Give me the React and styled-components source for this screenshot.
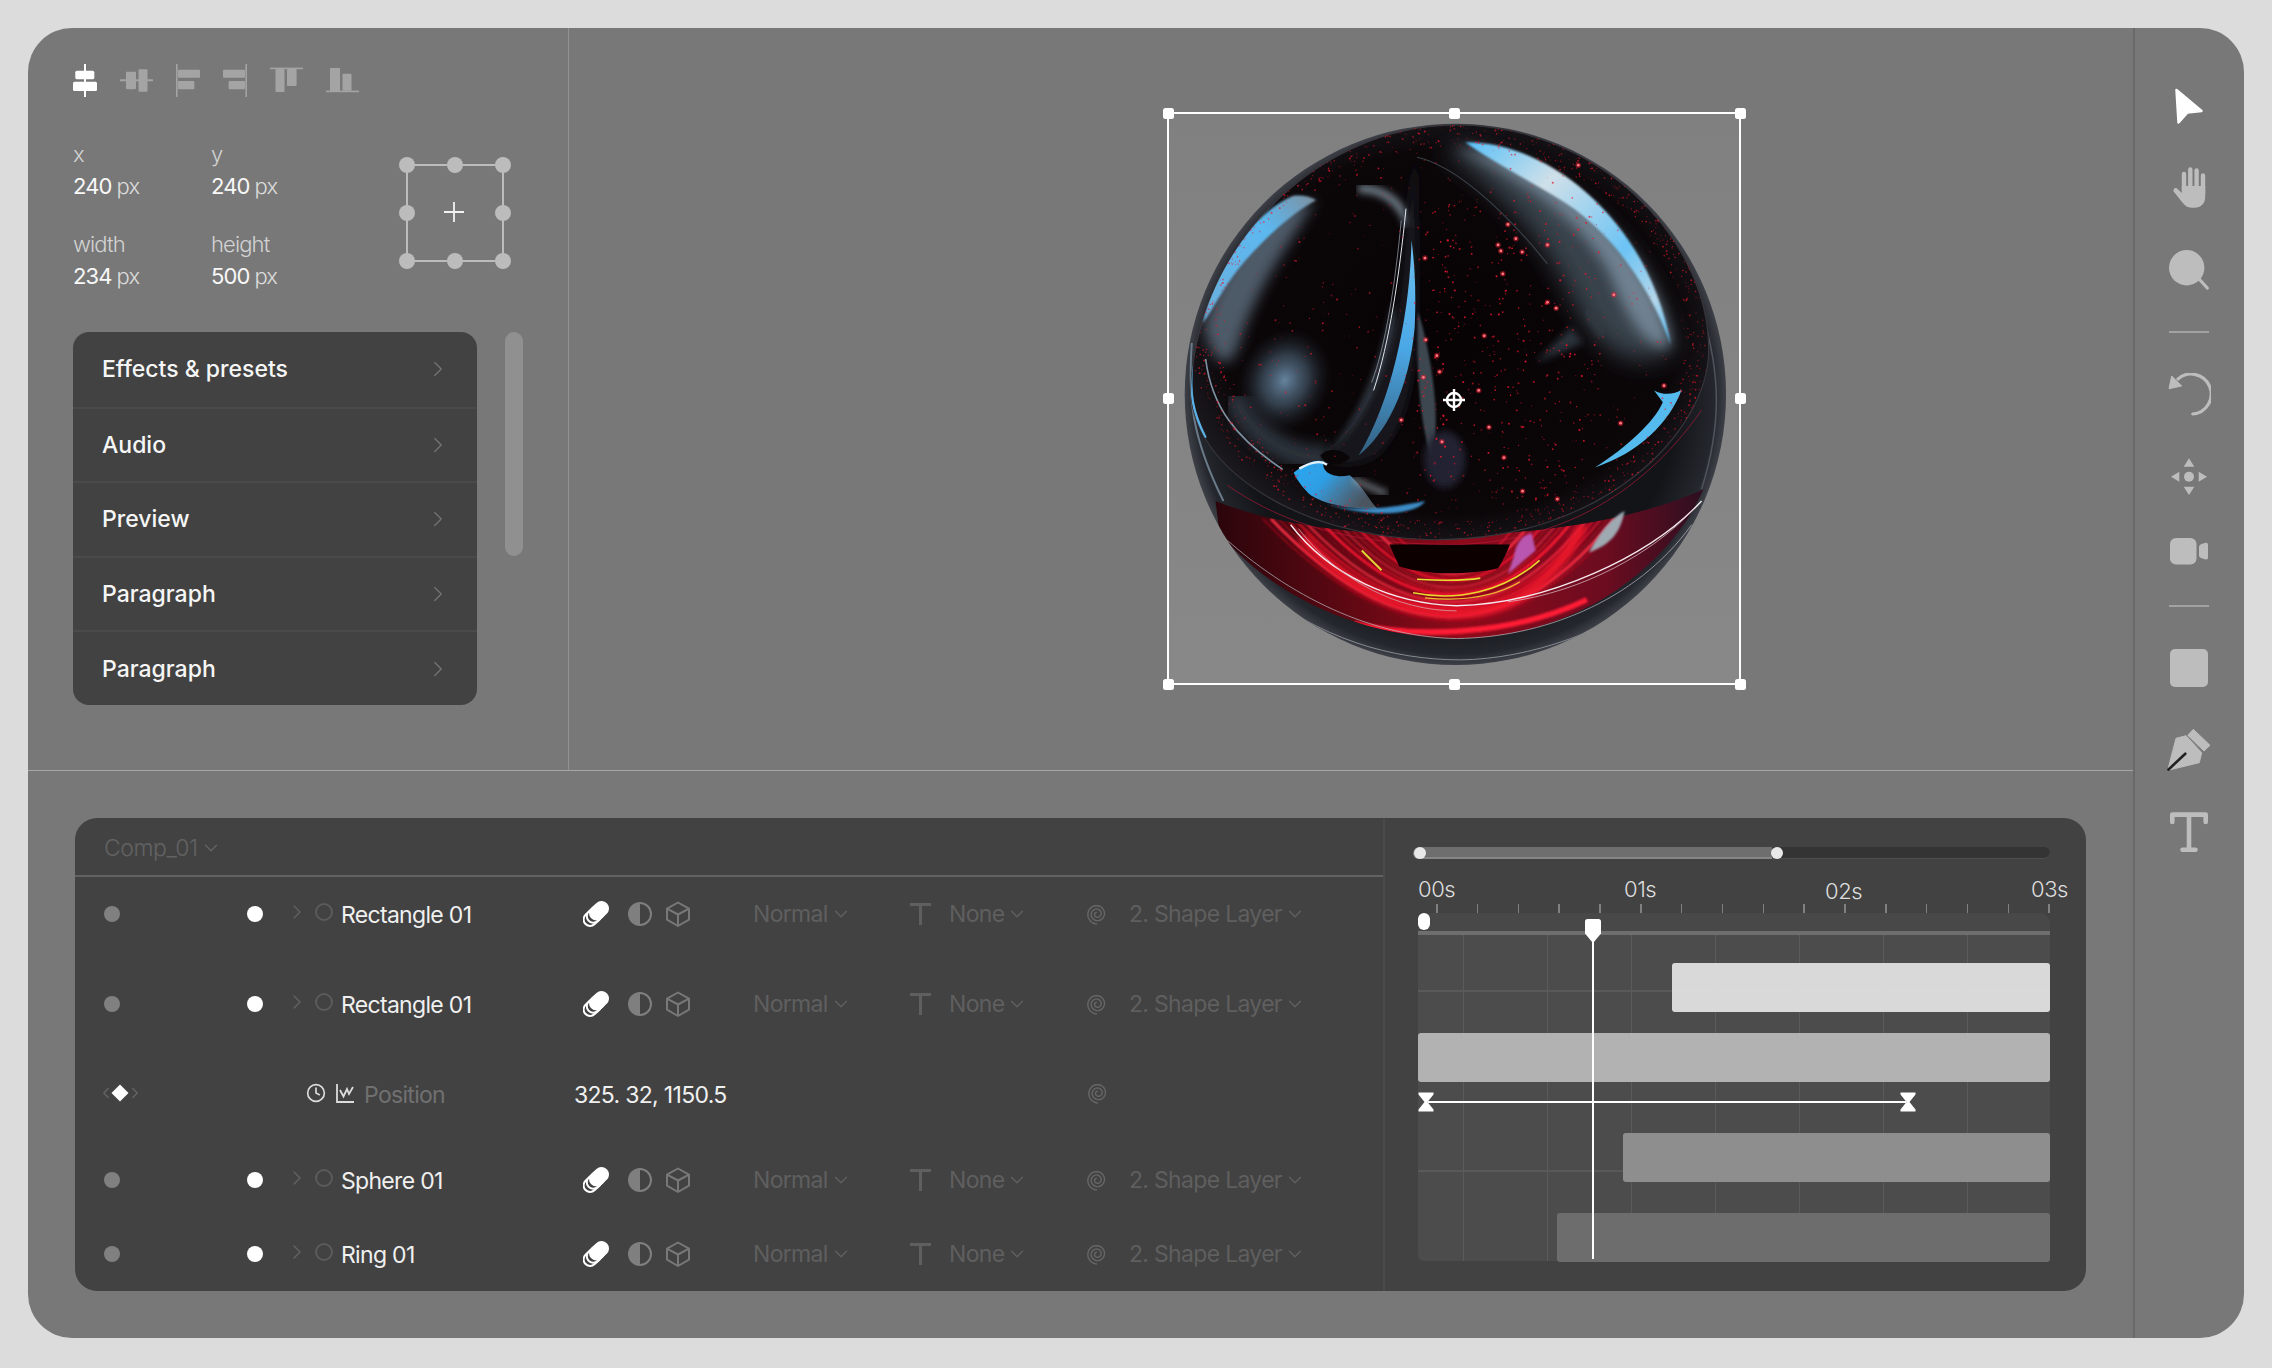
import React from 'react'
import styled, { createGlobalStyle } from 'styled-components'
import { ChevronRight, ChevronDown, ChevronLeft, Clock } from 'lucide-react'

const GlobalStyle = createGlobalStyle`
  html, body { margin: 0; padding: 0; background: #dcdcdc; }
  body { font-family: Inter, "Liberation Sans", sans-serif; }
`

const Page = styled.div`
  width: 2272px;
  height: 1368px;
  padding: 28px 28px 30px;
  box-sizing: border-box;
  overflow: hidden;
`

const Card = styled.div`
  display: flex;
  height: 100%;
  background: #787878;
  border-radius: 44px;
  overflow: hidden;
`

const Main = styled.div`
  display: flex;
  flex-direction: column;
  width: 2105px;
`

const Top = styled.div`
  display: flex;
  height: 743px;
  border-bottom: 1px solid #a6a6a6;
  box-sizing: border-box;
`

const Side = styled.aside`
  width: 541px;
  box-sizing: border-box;
  padding: 36px 0 0 45px;
  border-right: 1px solid #929292;
`

const AlignRow = styled.div`
  display: flex;
  gap: 23px;
  height: 33px;
`

const Metrics = styled.div`
  display: flex;
  margin-top: 41px;
`

const MetricGrid = styled.div`
  display: grid;
  grid-template-columns: 138px 138px;
  grid-template-rows: 32px 32px 58px 32px;
  width: 333px;
  font-size: 22px;
  line-height: 32px;
  letter-spacing: -0.04em;
`

const MetricLabel = styled.div`
  color: #d2d2d2;
  font-weight: 300;
  align-self: end;
`

const MetricValue = styled.div`
  color: #f8f8f8;
  font-weight: 400;
  span { color: #dcdcdc; font-weight: 300; margin-left: 5px; }
`

const AnchorBox = styled.div`
  position: relative;
  width: 98px;
  height: 98px;
  margin-top: 26px;
  border: 2px solid #bcbcbc;
  box-sizing: border-box;
`

const AnchorDot = styled.i`
  position: absolute;
  left: ${p => p.$x}px;
  top: ${p => p.$y}px;
  width: 16px;
  height: 16px;
  margin: -9px 0 0 -9px;
  border-radius: 50%;
  background: #bcbcbc;
`

const PlusMark = styled.svg`
  position: absolute;
  left: 36px;
  top: 36px;
`

const MenuWrap = styled.div`
  display: flex;
  gap: 28px;
  margin-top: 40px;
`

const Menu = styled.div`
  width: 404px;
  height: 373px;
  background: #424242;
  border-radius: 16px;
  overflow: hidden;
`

const MenuRow = styled.div`
  display: flex;
  align-items: center;
  justify-content: space-between;
  height: 74.6px;
  box-sizing: border-box;
  padding: 0 26px 0 29px;
  color: #f6f6f6;
  font-size: 23px;
  font-weight: 500;
  border-top: ${p => (p.$first ? 'none' : '2px solid #4a4a4a')};
  svg { color: #717171; }
`

const Scrollbar = styled.div`
  width: 18px;
  height: 224px;
  border-radius: 9px;
  background: #909090;
`

const Canvas = styled.section`
  flex: 1;
  padding: 84px 0 0 598px;
`

const Selection = styled.div`
  position: relative;
  width: 574px;
  height: 573px;
  border: 2px solid #fff;
  box-sizing: border-box;
  background: linear-gradient(#808080, #888888);
`

const SphereArt = styled.svg`
  position: absolute;
  left: -1px;
  top: -1px;
  width: 572px;
  height: 571px;
`

const Handle = styled.i`
  position: absolute;
  left: calc(${p => p.$x} * (100% + 2px) / 100);
  top: calc(${p => p.$y} * (100% + 2px) / 100);
  width: 11px;
  height: 11px;
  margin: -6.5px 0 0 -6.5px;
  border-radius: 2.5px;
  background: #fff;
`

const Crosshair = styled.svg`
  position: absolute;
  left: 273px;
  top: 274px;
`

const Bottom = styled.div`
  flex: 1;
  padding: 47px 0 0 47px;
`

const Timeline = styled.div`
  display: flex;
  width: 2011px;
  height: 473px;
  background: #424242;
  border-radius: 22px;
  overflow: hidden;
`

const Layers = styled.div`
  width: 1310px;
  box-sizing: border-box;
  border-right: 2px solid #4b4b4b;
`

const LayersHead = styled.div`
  display: flex;
  align-items: center;
  gap: 2px;
  height: 59px;
  padding: 2px 0 0 29px;
  box-sizing: border-box;
  border-bottom: 2px solid #626262;
  color: #626262;
  font-size: 23px;
  font-weight: 300;
  letter-spacing: -0.02em;
`

const Rows = styled.div`
  display: grid;
  grid-template-rows: 74px 106px 72px 102px 46px;
`

const LayerRow = styled.div`
  display: grid;
  grid-template-columns: 143px 46px 22px 26px 242px 45px 37px 88px 157px 39px 137px 43px 1fr;
  align-items: center;
  padding-left: 29px;
`

const PropRow = styled.div`
  display: grid;
  grid-template-columns: 209.5px 30px 28px 210px 513px 1fr;
  align-items: center;
  padding-left: 21.5px;
`

const Dot = styled.i`
  display: block;
  width: 16px;
  height: 16px;
  border-radius: 50%;
  background: ${p => (p.$on ? '#ffffff' : '#808080')};
`

const RowChevron = styled(ChevronRight)`
  margin: -4px 0 0 -8px;
  color: #626262;
`

const Ring = styled.i`
  display: block;
  width: 18px;
  height: 18px;
  border: 2px solid #5b5b5b;
  border-radius: 50%;
  box-sizing: border-box;
  margin-top: -4px;
`

const LayerName = styled.div`
  color: #f0f0f0;
  font-size: 23px;
  font-weight: 400;
  letter-spacing: -0.03em;
  margin-top: 1px;
`

const Muted = styled.div`
  display: flex;
  align-items: center;
  gap: 2px;
  color: #5f5f5f;
  font-size: 23px;
  font-weight: 400;
  letter-spacing: -0.03em;
`

const Keyframer = styled.div`
  display: flex;
  align-items: center;
  color: #666666;
`

const Diamond = styled.i`
  display: block;
  width: 12px;
  height: 12px;
  background: #fff;
  transform: rotate(45deg);
  margin: 0 -0.5px;
`

const PropName = styled.div`
  color: #707070;
  font-size: 23px;
  font-weight: 400;
  letter-spacing: -0.03em;
  margin-top: 3px;
`

const PropValue = styled.div`
  color: #f0f0f0;
  font-size: 23px;
  font-weight: 400;
  letter-spacing: -0.03em;
  margin-top: 3px;
`

const Tracks = styled.div`
  flex: 1;
  padding: 29px 0 0 33px;
`

const Slider = styled.div`
  position: relative;
  width: 637px;
  height: 12px;
  margin-left: -5px;
  border-radius: 6px;
  background: #343434;
  box-shadow: inset 0 -1px 0 #4e4e4e;
`

const SliderFill = styled.div`
  width: 359px;
  height: 100%;
  border-radius: 6px 0 0 6px;
  background: #6e6e6e;
  box-shadow: inset 0 -2px 0 #858585;
`

const SliderKnob = styled.i`
  position: absolute;
  top: 0;
  left: ${p => p.$x}px;
  width: 12px;
  height: 12px;
  border-radius: 50%;
  background: #e8e8e8;
`

const Seconds = styled.div`
  display: flex;
  justify-content: space-between;
  width: 650px;
  height: 30px;
  margin-top: 15px;
  color: #dedede;
  font-size: 22px;
  line-height: 30px;
  font-weight: 300;
  letter-spacing: -0.02em;
`

const Second = styled.span`
  position: relative;
  top: ${p => (p.$drop ? '2px' : '0')};
`

const Ticks = styled.div`
  display: flex;
  justify-content: space-between;
  width: 614px;
  height: 9px;
  margin: 0 0 0 18px;
`

const Tick = styled.i`
  display: block;
  width: 1.5px;
  background: #808080;
`

const Board = styled.div`
  position: relative;
  width: 632px;
  height: 348px;
  border-radius: 10px 10px 6px 6px;
  background: #484848;
`

const BoardHead = styled.div`
  height: 18px;
  border-bottom: 4px solid #6e6e6e;
  border-radius: 10px 10px 0 0;
`

const BoardBody = styled.div`
  height: 326px;
  background-color: #4c4c4c;
  background-image:
    linear-gradient(90deg, #5a5a5a 1px, transparent 1px),
    linear-gradient(#595959 2px, transparent 2px),
    linear-gradient(#595959 2px, transparent 2px);
  background-size: 84px 100%, 100% 100%, 100% 100%;
  background-position: 45px 0, 0 55px, 0 235px;
  background-repeat: repeat-x, no-repeat, no-repeat;
  padding-top: 28px;
  box-sizing: border-box;
  border-radius: 0 0 6px 6px;
`

const Clip = styled.div`
  height: 49px;
  margin-left: ${p => p.$left}px;
  margin-top: ${p => p.$mt}px;
  border-radius: 3px;
  background: ${p => p.$color};
  opacity: 0.98;
`

const Range = styled.div`
  display: flex;
  align-items: center;
  width: 498px;
  height: 20px;
  margin-top: 10px;
`

const RangeLine = styled.div`
  flex: 1;
  height: 2.5px;
  margin: 0 -6px;
  background: #fff;
`

const RangeCap = styled.svg`
  flex: none;
  position: relative;
  z-index: 1;
`

const KnobPill = styled.i`
  position: absolute;
  left: 0;
  top: 0;
  width: 12px;
  height: 17px;
  border-radius: 6px;
  background: #fff;
`

const Playhead = styled.div`
  position: absolute;
  left: 167px;
  top: 6px;
  width: 16px;
  height: 340px;
`

const Toolbar = styled.nav`
  display: flex;
  flex-direction: column;
  align-items: center;
  flex: 1;
  gap: 38px;
  padding: 56px 1px 0 0;
  border-left: 2px solid #696969;
  box-sizing: border-box;
`

const ToolDivider = styled.div`
  width: 40px;
  height: 2px;
  flex: none;
  background: #a2a2a2;
  margin-top: ${p => p.$mt ?? 1}px;
`

const ToolIcon = styled.svg`
  display: block;
  flex: none;
  margin-top: ${p => p.$mt || 0}px;
  color: #bdbdbd;
`

// small drawings

const A1 = () => (
  <svg width="24" height="33" viewBox="0 0 24 33" fill="#fff">
    <rect x="11" y="0" width="2" height="33" />
    <rect x="2.3" y="6.7" width="19" height="8.6" rx="1.5" />
    <rect x="0" y="17.7" width="24" height="9.4" rx="1.5" />
  </svg>
)
const A2 = () => (
  <svg width="33" height="33" viewBox="0 0 33 33" fill="#a4a4a4">
    <rect x="0" y="15.3" width="33" height="2" />
    <rect x="6" y="7.7" width="10" height="17.6" rx="1" />
    <rect x="18.5" y="5.3" width="9" height="22.4" rx="1" />
  </svg>
)
const A3 = () => (
  <svg width="24" height="33" viewBox="0 0 24 33" fill="#a4a4a4">
    <rect x="0" y="0" width="1.6" height="33" />
    <rect x="2" y="5.7" width="22" height="8" rx="1" />
    <rect x="2" y="17" width="16.4" height="8.3" rx="1" />
  </svg>
)
const A4 = () => (
  <svg width="24" height="33" viewBox="0 0 24 33" fill="#a4a4a4">
    <rect x="22.4" y="0" width="1.6" height="33" />
    <rect x="0" y="5.7" width="22" height="8" rx="1" />
    <rect x="5.6" y="17" width="16.4" height="8.3" rx="1" />
  </svg>
)
const A5 = () => (
  <svg width="33" height="33" viewBox="0 0 33 33" fill="#a4a4a4">
    <rect x="0" y="3.6" width="33" height="1.6" />
    <rect x="5.5" y="5" width="9" height="23" rx="1" />
    <rect x="17" y="5" width="9.6" height="17" rx="1" />
  </svg>
)
const A6 = () => (
  <svg width="33" height="33" viewBox="0 0 33 33" fill="#a4a4a4">
    <rect x="0" y="26.6" width="33" height="1.6" />
    <rect x="4" y="4" width="10" height="23" rx="1" />
    <rect x="16.5" y="9.7" width="9" height="17" rx="1" />
  </svg>
)

const pill = 'M13.5 12 18.5 7.5'

const LayersIcon = () => (
  <svg width="27" height="26" viewBox="0 0 27 26" fill="none" strokeLinecap="round">
    <g transform="translate(-6.4 6.4)">
      <path d={pill} stroke="#fff" strokeWidth="15" />
      <path d={pill} stroke="#424242" strokeWidth="11" />
    </g>
    <g transform="translate(-3.2 3.2)">
      <path d={pill} stroke="#fff" strokeWidth="15" />
      <path d={pill} stroke="#424242" strokeWidth="11" />
    </g>
    <path d={pill} stroke="#fff" strokeWidth="15" />
  </svg>
)

const HalfIcon = () => (
  <svg width="24" height="24" viewBox="0 0 24 24">
    <circle cx="12" cy="12" r="11" fill="none" stroke="#7f7f7f" strokeWidth="2" />
    <path d="M12 1a11 11 0 0 0 0 22z" fill="#7f7f7f" />
  </svg>
)

const CubeIcon = () => (
  <svg width="26" height="26" viewBox="0 0 26 26" fill="none" stroke="#787878" strokeWidth="2" strokeLinejoin="round">
    <path d="M13 1.5 24 7.7v11L13 25 2 18.7V7.7z" />
    <path d="M2 7.7 13 13.5 24 7.7M13 13.5V25" />
  </svg>
)

const SmallT = () => (
  <svg width="21" height="22" viewBox="0 0 21 22" fill="none" stroke="#5f5f5f" strokeWidth="3">
    <path d="M0 1.5H21M10.5 1.5V22" />
  </svg>
)

// two and a half turns, outside in
const spiralPath = Array.from({ length: 80 }).map((_, i) => {
  const t = i / 79
  const a = t * Math.PI * 5 + Math.PI / 2
  const r = 10 - t * 8.4
  return `${i ? 'L' : 'M'}${(11 + Math.cos(a) * r).toFixed(2)} ${(11 + Math.sin(a) * r).toFixed(2)}`
}).join('')

const Spiral = () => (
  <svg width="22" height="22" viewBox="0 0 22 22" fill="none" stroke="#666666" strokeWidth="1.4">
    <path d={spiralPath} />
  </svg>
)

const GraphIcon = () => (
  <svg width="18" height="19" viewBox="0 0 18 19" fill="none" stroke="#dcdcdc" strokeWidth="1.8">
    <path d="M1 0V18H18" />
    <path d="M4 6 7.5 12.5 11 5 13 10 17 3" />
  </svg>
)

const Hourglass = () => (
  <RangeCap width="16" height="20" viewBox="0 0 16 20" fill="#fff">
    <path d="M0.5 0.5H15.5V2.5L9.5 10 15.5 17.5V19.5H0.5V17.5L6.5 10 0.5 2.5z" />
  </RangeCap>
)

const PlayheadIcon = () => (
  <svg width="16" height="340" viewBox="0 0 16 340" fill="#fff">
    <path d="M0 2.5Q0 0 2.5 0H13.5Q16 0 16 2.5V14.5L8.9 23H7.1L0 14.5z" />
    <rect x="7" y="20" width="2" height="320" />
  </svg>
)

const rows = [
  { name: 'Rectangle 01' },
  { name: 'Rectangle 01' },
  null,
  { name: 'Sphere 01' },
  { name: 'Ring 01' },
]

const Layer = ({ name }) => (
  <LayerRow>
    <Dot />
    <Dot $on />
    <RowChevron size={24} strokeWidth={1.4} />
    <Ring />
    <LayerName>{name}</LayerName>
    <LayersIcon />
    <HalfIcon />
    <CubeIcon />
    <Muted>Normal <ChevronDown size={22} strokeWidth={1.6} /></Muted>
    <SmallT />
    <Muted>None <ChevronDown size={22} strokeWidth={1.6} /></Muted>
    <Spiral />
    <Muted>2. Shape Layer <ChevronDown size={22} strokeWidth={1.6} /></Muted>
  </LayerRow>
)

// sphere

const lcg = seed => () => {
  seed = (seed * 1664525 + 1013904223) % 4294967296
  return seed / 4294967296
}

const buildSpecks = () => {
  const rand = lcg(73)
  const out = []
  // fine dust over the whole bowl
  for (let i = 0; i < 520; i++) {
    const a = rand() * Math.PI * 2
    const r = Math.sqrt(rand())
    out.push({
      x: 790 + Math.cos(a) * r * 640,
      y: 620 + Math.sin(a) * r * 530,
      r: 1 + rand() * 1.5,
      o: 0.35 + rand() * 0.45,
    })
  }
  // denser near the rim
  for (let i = 0; i < 1100; i++) {
    const a = rand() * Math.PI * 2
    const r = 0.9 + rand() * 0.12
    out.push({
      x: 790 + Math.cos(a) * r * 650,
      y: 620 + Math.sin(a) * r * 525,
      r: 1 + rand() * 1.4,
      o: 0.35 + rand() * 0.5,
    })
  }
  // right of the spike
  for (let i = 0; i < 320; i++) {
    out.push({
      x: 700 + rand() * 460,
      y: 280 + rand() * 760,
      r: 1.2 + rand() * 1.6,
      o: 0.5 + rand() * 0.5,
    })
  }
  return out
}

const specks = buildSpecks()

const hotSpots = [
  [930, 340], [950, 376], [905, 392], [912, 407], [966, 410], [1030, 392], [917, 465], [1030, 537], [1052, 552],
  [720, 425], [722, 632], [870, 622], [750, 672], [757, 713], [716, 727], [856, 760], [882, 853], [920, 930],
  [763, 890], [967, 1015], [1055, 1035], [1215, 843], [1325, 748], [660, 835], [1198, 518], [1108, 190],
]

// concentric streaks in the red reflection
const streaks = Array.from({ length: 16 }).map((_, i) => {
  const a = 190 + i * 20
  const b = 120 + i * 9
  return {
    d: `M${800 - a} 1085Q800 ${1085 + b * 2} ${800 + a * 0.85} 1085`,
    c: ['#ff1530', '#8e0a1a', '#ff2f44', '#c00d22'][i % 4],
    w: 3 + (i % 3) * 2,
  }
})

const bowlPath = 'M128 770C130 420 430 90 800 88C1150 88 1440 370 1438 660C1436 860 1180 1140 740 1138C390 1132 135 950 128 770Z'
const redPath = 'M190 1040C480 1160 1100 1160 1425 1010L1400 1060C1300 1230 1090 1385 800 1388C560 1385 330 1280 200 1120Z'

const Sphere = () => (
  <SphereArt viewBox="70 58 1447 1445">
    <defs>
      <radialGradient id="body" cx="50%" cy="50%" r="50%">
        <stop offset="0.82" stopColor="#121418" />
        <stop offset="0.96" stopColor="#24272d" />
        <stop offset="1" stopColor="#3d4047" />
      </radialGradient>
      <linearGradient id="redBand" x1="0" y1="0" x2="1" y2="0">
        <stop offset="0" stopColor="#2a050b" />
        <stop offset="0.25" stopColor="#5a0812" />
        <stop offset="0.5" stopColor="#8f0a1a" />
        <stop offset="0.8" stopColor="#6c0c20" />
        <stop offset="1" stopColor="#2c0f20" />
      </linearGradient>
      <radialGradient id="bowl" cx="50%" cy="50%" r="55%">
        <stop offset="0" stopColor="#070305" />
        <stop offset="0.8" stopColor="#0b0709" />
        <stop offset="1" stopColor="#1d1c22" />
      </radialGradient>
      <linearGradient id="blueCres" x1="0" y1="0" x2="1" y2="1">
        <stop offset="0" stopColor="#58c0f8" />
        <stop offset="0.3" stopColor="#cfe0e9" />
        <stop offset="0.65" stopColor="#6cc4f5" />
        <stop offset="0.85" stopColor="#b4d6ea" />
        <stop offset="1" stopColor="#55bcf7" />
      </linearGradient>
      <linearGradient id="blueLeft" x1="1" y1="0" x2="0" y2="1">
        <stop offset="0" stopColor="#7d8f9e" />
        <stop offset="0.35" stopColor="#5cb8f0" />
        <stop offset="1" stopColor="#6cb0dc" />
      </linearGradient>
      <linearGradient id="spikeBlue" x1="0" y1="0" x2="0" y2="1">
        <stop offset="0" stopColor="#6cc0f2" />
        <stop offset="0.5" stopColor="#4ba8e6" />
        <stop offset="1" stopColor="#33607f" />
      </linearGradient>
      <linearGradient id="pool" x1="0" y1="0" x2="1" y2="0.5">
        <stop offset="0" stopColor="#2aa8f2" />
        <stop offset="0.45" stopColor="#2f9ee4" />
        <stop offset="1" stopColor="#74889a" stopOpacity="0.6" />
      </linearGradient>
      <radialGradient id="blob">
        <stop offset="0" stopColor="#65839f" />
        <stop offset="0.5" stopColor="#3a4958" stopOpacity="0.8" />
        <stop offset="1" stopColor="#1a1d22" stopOpacity="0" />
      </radialGradient>
      <filter id="b1"><feGaussianBlur stdDeviation="1.5" /></filter>
      <filter id="b3"><feGaussianBlur stdDeviation="3" /></filter>
      <filter id="b8"><feGaussianBlur stdDeviation="9" /></filter>
      <filter id="b16"><feGaussianBlur stdDeviation="16" /></filter>
      <filter id="b30"><feGaussianBlur stdDeviation="30" /></filter>
      <clipPath id="bowlClip"><path d={bowlPath} /></clipPath>
      <clipPath id="ballClip"><circle cx="797" cy="770" r="685" /></clipPath>
      <clipPath id="redClip"><path d={redPath} /></clipPath>
    </defs>

    <circle cx="797" cy="770" r="685" fill="url(#body)" />

    <g clipPath="url(#ballClip)">
      {/* red reflection under the bowl */}
      <path d={redPath} fill="url(#redBand)" />
      <g clipPath="url(#redClip)">
        <g filter="url(#b3)">
          {streaks.map((s, i) => (
            <path key={i} d={s.d} fill="none" stroke={s.c} strokeWidth={s.w} />
          ))}
        </g>
        <path d="M540 1350C680 1385 930 1385 1130 1290" fill="none" stroke="#ff1c35" strokeWidth="14" filter="url(#b3)" />
        <path d="M410 1130C520 1260 660 1320 800 1322C930 1320 1040 1260 1120 1100" fill="none" stroke="#f0142c" strokeWidth="26" filter="url(#b8)" />
      </g>
      <path d="M630 1150H935C925 1175 915 1195 905 1210C830 1228 720 1228 655 1205Z" fill="#0a0305" filter="url(#b1)" />
      <path d="M945 1180C950 1150 965 1125 990 1120L1000 1165C975 1185 955 1205 930 1225Z" fill="#b856b0" filter="url(#b3)" />
      <path d="M1135 1170C1160 1120 1195 1080 1225 1065C1215 1120 1190 1150 1135 1170Z" fill="#9ea9b2" filter="url(#b3)" />
      <path d="M700 1238C770 1242 830 1240 860 1235" fill="none" stroke="#e6de30" strokeWidth="4" filter="url(#b1)" />
      <path d="M690 1272C800 1295 920 1270 1010 1190" fill="none" stroke="#e8d82e" strokeWidth="4" filter="url(#b1)" />
      <path d="M720 1285C820 1295 900 1280 960 1245" fill="none" stroke="#f0c030" strokeWidth="3" filter="url(#b1)" />
      <path d="M560 1165 610 1215" stroke="#e0d435" strokeWidth="5" filter="url(#b1)" />
      <path d="M380 1100C480 1230 640 1300 800 1305C1030 1300 1290 1180 1420 1040" fill="none" stroke="#f4e9ee" strokeWidth="3.5" />
      <path d="M400 1110C500 1240 650 1318 800 1318" fill="none" stroke="#d0a4ac" strokeWidth="2" />
      <path d="M1400 1060C1300 1170 1120 1270 930 1295" fill="none" stroke="#d4b4c0" strokeWidth="2" />
      <path d="M215 1135C400 1300 610 1385 800 1388C1010 1385 1250 1300 1395 1100" fill="none" stroke="#b9bcc2" strokeWidth="1.8" />
      <path d="M285 1250C450 1390 640 1442 810 1442C980 1440 1200 1370 1340 1240" fill="none" stroke="#878b92" strokeWidth="2.5" />
      <path d="M1420 560C1470 720 1470 850 1420 1010" fill="none" stroke="#50535b" strokeWidth="4" />
      <path d="M130 640C120 780 130 880 210 1040" fill="none" stroke="#6a7a88" strokeWidth="5" filter="url(#b1)" />
    </g>

    {/* glass bowl */}
    <path d={bowlPath} fill="url(#bowl)" stroke="#37353b" strokeWidth="3" />

    <g clipPath="url(#bowlClip)">
      {/* upper right lens */}
      <path d="M760 150C1000 140 1320 400 1345 660C1240 720 1150 650 1090 520C1020 370 900 240 760 150Z" fill="#39424c" filter="url(#b30)" />
      <path d="M790 145C1010 150 1310 400 1340 650C1290 660 1240 600 1190 470C1120 330 960 220 790 145Z" fill="#6f8191" filter="url(#b16)" />
      <path d="M822 132C1040 130 1290 340 1342 645C1290 500 1190 350 1050 270C960 215 880 175 822 132Z" fill="url(#blueCres)" filter="url(#b3)" />
      <path d="M700 170C790 190 910 290 1030 440" fill="none" stroke="#3a4048" strokeWidth="3" filter="url(#b1)" />

      {/* left lens */}
      <path d="M160 600C200 440 310 300 440 278C400 360 300 480 250 640C235 700 190 720 160 600Z" fill="#4d5a67" filter="url(#b16)" />
      <path d="M245 790C290 880 370 930 460 930" fill="none" stroke="#2c333b" strokeWidth="60" strokeLinecap="round" filter="url(#b16)" />
      <ellipse cx="365" cy="735" rx="115" ry="135" fill="url(#blob)" transform="rotate(25 365 735)" />
      <path d="M385 268C290 310 185 440 158 590C180 560 210 500 250 450C300 390 370 320 445 278C425 268 405 265 385 268Z" fill="url(#blueLeft)" filter="url(#b3)" />
      <path d="M165 680C180 800 240 880 360 960" fill="none" stroke="#7f93a4" strokeWidth="4" filter="url(#b1)" />
      <path d="M130 690C125 770 130 810 165 880" fill="none" stroke="#5bb2e6" strokeWidth="6" filter="url(#b1)" />
      <path d="M560 250C620 250 660 290 680 340" fill="none" stroke="#6b7782" strokeWidth="22" strokeLinecap="round" filter="url(#b8)" />

      {/* spike */}
      <path d="M640 540C610 700 550 840 470 925C540 900 620 780 655 600Z" fill="#3b454f" filter="url(#b8)" />
      <path d="M697 170C680 260 670 330 664 420C650 650 590 830 462 928C500 960 560 950 600 925C650 880 690 800 700 620C705 450 700 300 697 170Z" fill="#14171b" filter="url(#b8)" />
      <path d="M686 380C682 560 640 780 552 925C620 870 680 760 694 600C698 510 694 440 686 380Z" fill="url(#spikeBlue)" filter="url(#b1)" />
      <path d="M702 560C698 720 706 830 735 930C765 850 735 660 702 560Z" fill="#3c4650" filter="url(#b3)" />
      <path d="M672 300C655 470 630 640 590 760" fill="none" stroke="#e6ecef" strokeWidth="2.5" />
      <path d="M660 330C645 490 620 650 585 740" fill="none" stroke="#8e9aa4" strokeWidth="2" />
      <ellipse cx="770" cy="935" rx="52" ry="72" fill="#232332" filter="url(#b8)" />

      {/* lower left pool */}
      <path d="M388 968C410 950 440 932 465 940C455 960 480 985 530 975C560 1000 580 1040 600 1060C540 1060 460 1050 425 1020C405 1000 392 980 388 968Z" fill="url(#pool)" filter="url(#b1)" />
      <path d="M455 925C470 905 510 905 530 930C510 955 470 955 455 925Z" fill="#0a0608" />
      <path d="M402 958C430 942 455 935 472 948" fill="none" stroke="#e4f2fa" strokeWidth="6" filter="url(#b1)" />
      <path d="M470 1046C540 1068 620 1060 720 1040C700 1075 580 1085 470 1046Z" fill="#3d8cc6" filter="url(#b3)" />
      <path d="M540 985C570 1000 590 1010 620 1020" fill="none" stroke="#9aa6ae" strokeWidth="10" strokeLinecap="round" filter="url(#b8)" />

      {/* lower right glint */}
      <path d="M1300 760C1320 772 1350 772 1370 758C1340 840 1260 920 1150 955C1230 905 1300 840 1322 790Z" fill="#55bbee" filter="url(#b1)" />
      <path d="M1000 690 1090 600 1120 640Z" fill="#2c333a" filter="url(#b8)" />
      <path d="M1130 560 1170 620" stroke="#353d45" strokeWidth="14" strokeLinecap="round" filter="url(#b8)" />

      {specks.map((s, i) => (
        <circle key={i} cx={s.x} cy={s.y} r={s.r} fill="#e8182e" opacity={s.o} />
      ))}
      {hotSpots.map(([x, y], i) => (
        <g key={i}>
          <circle cx={x} cy={y} r="7" fill="#ff1a30" opacity=".45" />
          <circle cx={x} cy={y} r="3.5" fill="#ff7a80" />
        </g>
      ))}
    </g>

    {/* bowl lip */}
    <path d="M220 1000C420 1140 640 1150 810 1150C1040 1140 1260 1040 1420 810" fill="none" stroke="#c21a3c" strokeWidth="2.5" opacity=".6" />
  </SphereArt>
)

export default function App() {
  const handles = [[0, 0], [50, 0], [100, 0], [0, 50], [100, 50], [0, 100], [50, 100], [100, 100]]
  const anchors = [[0, 0], [48, 0], [96, 0], [0, 48], [96, 48], [0, 96], [48, 96], [96, 96]]
  return (
    <Page>
      <GlobalStyle />
      <Card>
        <Main>
          <Top>
            <Side>
              <AlignRow>
                <A1 /><A2 /><A3 /><A4 /><A5 /><A6 />
              </AlignRow>
              <Metrics>
                <MetricGrid>
                  <MetricLabel>x</MetricLabel>
                  <MetricLabel>y</MetricLabel>
                  <MetricValue>240<span>px</span></MetricValue>
                  <MetricValue>240<span>px</span></MetricValue>
                  <MetricLabel>width</MetricLabel>
                  <MetricLabel>height</MetricLabel>
                  <MetricValue>234<span>px</span></MetricValue>
                  <MetricValue>500<span>px</span></MetricValue>
                </MetricGrid>
                <AnchorBox>
                  {anchors.map(([x, y]) => <AnchorDot key={x + '-' + y} $x={x} $y={y} />)}
                  <PlusMark width="20" height="20" viewBox="0 0 20 20" stroke="#f2f2f2" strokeWidth="1.8">
                    <path d="M10 0V20M0 10H20" />
                  </PlusMark>
                </AnchorBox>
              </Metrics>
              <MenuWrap>
                <Menu>
                  {['Effects & presets', 'Audio', 'Preview', 'Paragraph', 'Paragraph'].map((t, i) => (
                    <MenuRow key={i} $first={i === 0}>
                      {t}
                      <ChevronRight size={26} strokeWidth={1.3} />
                    </MenuRow>
                  ))}
                </Menu>
                <Scrollbar />
              </MenuWrap>
            </Side>
            <Canvas>
              <Selection>
                <Sphere />
                {handles.map(([x, y]) => <Handle key={x + '-' + y} $x={x} $y={y} />)}
                <Crosshair width="24" height="24" viewBox="0 0 24 24" fill="none" stroke="#fff">
                  <circle cx="12" cy="12" r="7" strokeWidth="2.4" />
                  <path d="M12 1V23M1 12H23" strokeWidth="2.4" />
                </Crosshair>
              </Selection>
            </Canvas>
          </Top>
          <Bottom>
            <Timeline>
              <Layers>
                <LayersHead>Comp_01 <ChevronDown size={22} strokeWidth={1.6} /></LayersHead>
                <Rows>
                  {rows.map((r, i) => r ? <Layer key={i} name={r.name} /> : (
                    <PropRow key={i}>
                      <Keyframer>
                        <ChevronLeft size={18} strokeWidth={1.6} />
                        <Diamond />
                        <ChevronRight size={18} strokeWidth={1.6} />
                      </Keyframer>
                      <Clock size={20} color="#dcdcdc" strokeWidth={2} />
                      <GraphIcon />
                      <PropName>Position</PropName>
                      <PropValue>325. 32, 1150.5</PropValue>
                      <Spiral />
                    </PropRow>
                  ))}
                </Rows>
              </Layers>
              <Tracks>
                <Slider>
                  <SliderFill />
                  <SliderKnob $x={1} />
                  <SliderKnob $x={358} />
                </Slider>
                <Seconds>
                  <Second>00s</Second>
                  <Second>01s</Second>
                  <Second $drop>02s</Second>
                  <Second>03s</Second>
                </Seconds>
                <Ticks>
                  {Array.from({ length: 16 }).map((_, i) => <Tick key={i} />)}
                </Ticks>
                <Board>
                  <BoardHead />
                  <BoardBody>
                    <Clip $left={254} $mt={0} $color="#dcdcdc" />
                    <Clip $left={0} $mt={21} $color="#b5b5b5" />
                    <Range>
                      <Hourglass />
                      <RangeLine />
                      <Hourglass />
                    </Range>
                    <Clip $left={205} $mt={21} $color="#909090" />
                    <Clip $left={139} $mt={31} $color="#6e6e6e" />
                  </BoardBody>
                  <KnobPill />
                  <Playhead><PlayheadIcon /></Playhead>
                </Board>
              </Tracks>
            </Timeline>
          </Bottom>
        </Main>
        <Toolbar>
          <ToolIcon width="44" height="44" viewBox="0 0 44 44">
            <path d="M9.5 6 34.5 27 20.5 28.5 11.5 38.5Z" fill="#fff" stroke="#fff" strokeWidth="2.5" strokeLinejoin="round" />
          </ToolIcon>
          <ToolIcon width="44" height="44" viewBox="0 0 44 44">
            <g stroke="currentColor" strokeWidth="4.4" strokeLinecap="round" fill="none">
              <path d="M17 8V24M23.3 3.5V24M29.6 4.5V24M36 9.5V28" />
            </g>
            <path d="M14.8 20H38.2V31C38.2 37.5 34 41.7 27.5 41.7H24.5C20.5 41.7 17.5 39.5 15 36L7 26C5.5 23.5 8 21 10 22.5L14.8 27Z" fill="currentColor" />
          </ToolIcon>
          <ToolIcon width="44" height="44" viewBox="0 0 44 44">
            <circle cx="19.7" cy="19.7" r="17.7" fill="currentColor" />
            <path d="M33 32 40.3 40" stroke="currentColor" strokeWidth="3.2" strokeLinecap="round" />
          </ToolIcon>
          <ToolDivider />
          <ToolIcon $mt={2} width="44" height="44" viewBox="0 0 44 44" fill="none">
            <path d="M25.7 41A20 20 0 1 0 11 6" stroke="currentColor" strokeWidth="3.2" strokeLinecap="round" />
            <path d="M4.7 3 2 15.7 14.7 13Z" fill="currentColor" stroke="currentColor" strokeWidth="1" strokeLinejoin="round" />
          </ToolIcon>
          <ToolIcon width="44" height="44" viewBox="0 0 44 44" fill="currentColor">
            <path d="M22 3.3 27.3 11.7H16.7ZM22 40 27.3 31.7H16.7ZM4 21.7 12.3 16.7V26.7ZM40 21.7 31.7 16.7V26.7Z" />
            <circle cx="22" cy="21.7" r="5" />
          </ToolIcon>
          <ToolIcon $mt={-8} width="44" height="44" viewBox="0 0 44 44" fill="currentColor">
            <rect x="3" y="9" width="26.5" height="26.5" rx="6" />
            <path d="M32 18Q32 16 34 15.3L38.5 13.8Q41 13.4 41 15.5V28.7Q41 30.8 38.5 30.4L34 28.9Q32 28.2 32 26.2Z" />
          </ToolIcon>
          <ToolDivider $mt={-6} />
          <ToolIcon $mt={1} width="44" height="44" viewBox="0 0 44 44" fill="currentColor">
            <rect x="3" y="3" width="38" height="38" rx="5" />
          </ToolIcon>
          <ToolIcon width="44" height="44" viewBox="0 0 44 44" fill="currentColor">
            <path d="M0.7 42.3 9 10.3 19 7.7 34.7 24.7 32.3 34.7Z" stroke="currentColor" strokeWidth="1" strokeLinejoin="round" />
            <path d="M26.3 1.3 43 17.3 37 23 20.7 7.3Z" stroke="currentColor" strokeWidth="1" strokeLinejoin="round" />
            <path d="M1.3 41.7 18.3 25.7" stroke="#222" strokeWidth="2.6" strokeLinecap="round" />
          </ToolIcon>
          <ToolIcon width="44" height="44" viewBox="0 0 44 44" fill="none" stroke="currentColor" strokeWidth="4.6" strokeLinecap="round" strokeLinejoin="round">
            <path d="M5.3 12V4.6H38.7V12M22 4.6V39.5M15.5 39.8H28.5" />
          </ToolIcon>
        </Toolbar>
      </Card>
    </Page>
  )
}
